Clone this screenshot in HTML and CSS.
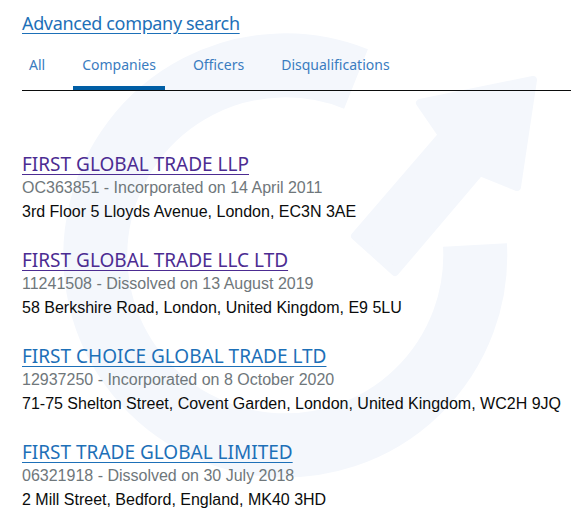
FILE: index.html
```html
<!DOCTYPE html>
<html lang="en">
<head>
    <meta charset="UTF-8">
    <meta name="viewport" content="width=device-width, initial-scale=1.0">
    <title>Search</title>
    <link rel="stylesheet" href="styles.css">
</head>
<body>
    <svg class="watermark" width="571" height="524" viewBox="0 0 571 524">
        <path d="M 356 79 A 190 190 0 1 0 475 245" fill="none" stroke="#f4f7fc" stroke-width="64"/>
        <polygon points="420,103 533,80 517,187 480,172 395,272 355,236 442,135" fill="#f4f7fc" stroke="#f4f7fc" stroke-width="8" stroke-linejoin="round"/>
    </svg>
    <main>
        <a class="advanced" href="#">Advanced company search</a>
        <nav class="tabs">
            <a href="#">All</a>
            <a href="#" class="active">Companies</a>
            <a href="#">Officers</a>
            <a href="#">Disqualifications</a>
        </nav>
        <ul class="results">
            <li>
                <a href="#" class="visited">FIRST GLOBAL TRADE LLP</a>
                <p class="meta">OC363851 - Incorporated on 14 April 2011</p>
                <p>3rd Floor 5 Lloyds Avenue, London, EC3N 3AE</p>
            </li>
            <li>
                <a href="#" class="visited">FIRST GLOBAL TRADE LLC LTD</a>
                <p class="meta">11241508 - Dissolved on 13 August 2019</p>
                <p>58 Berkshire Road, London, United Kingdom, E9 5LU</p>
            </li>
            <li>
                <a href="#">FIRST CHOICE GLOBAL TRADE LTD</a>
                <p class="meta">12937250 - Incorporated on 8 October 2020</p>
                <p>71-75 Shelton Street, Covent Garden, London, United Kingdom, WC2H 9JQ</p>
            </li>
            <li>
                <a href="#">FIRST TRADE GLOBAL LIMITED</a>
                <p class="meta">06321918 - Dissolved on 30 July 2018</p>
                <p>2 Mill Street, Bedford, England, MK40 3HD</p>
            </li>
        </ul>
    </main>
</body>
</html>
```

FILE: styles.css
```css
body {
    margin: 0;
    background: #ffffff;
    font-family: 'Liberation Sans', Arial, sans-serif;
    color: #0b0c0c;
    position: relative;
}
.watermark {
    position: absolute;
    top: 0;
    left: 0;
    z-index: -1;
}
main {
    padding: 10px 0 0 22px;
}
a {
    color: #1d70b8;
}
.advanced {
    display: inline-block;
    font-family: 'Noto Sans', sans-serif;
    font-size: 18px;
    line-height: 26px;
    letter-spacing: -0.35px;
    text-underline-offset: 3px;
}
.tabs {
    display: flex;
    margin-top: 11px;
    border-bottom: 1px solid #0b0c0c;
}
.tabs a {
    font-family: 'Noto Sans', sans-serif;
    font-size: 14px;
    line-height: 20px;
    text-decoration: none;
    padding: 8px 9px 11px 9px;
    margin-right: 19px;
    border-bottom: 4px solid transparent;
    color: #3a7cc0;
}
.tabs a:first-child {
    margin-left: -2px;
}
.tabs a.active {
    border-bottom-color: #005ea5;
}
.results {
    list-style: none;
    margin: 0;
    padding: 62px 0 0 0;
}
.results li {
    margin-bottom: 25px;
}
.results li a {
    font-family: 'Noto Sans', sans-serif;
    font-size: 19px;
    line-height: 23px;
    text-underline-offset: 3px;
}
.results li a.visited {
    color: #4c2c92;
}
.results p {
    margin: 0;
    font-size: 16px;
    line-height: 24px;
}
.results p.meta {
    color: #6f777b;
}
```
